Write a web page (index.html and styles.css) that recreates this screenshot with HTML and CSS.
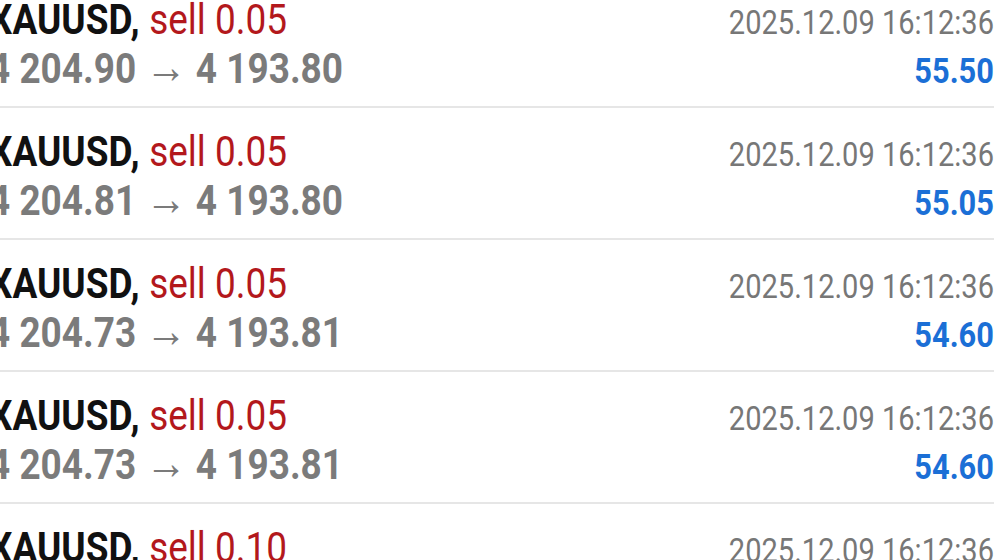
FILE: index.html
```html
<!DOCTYPE html>
<html lang="en">
  <head>
    <meta charset="UTF-8" />
    <meta name="viewport" content="width=device-width, initial-scale=1.0" />
    <title>History - Deals</title>
    <link rel="stylesheet" href="styles.css">
  </head>
  <body>
    <div class="deals">
      <div class="deal">
        <div class="line">
          <span class="symbol">XAUUSD,</span>
          <span class="type">sell 0.05</span>
          <span class="time">2025.12.09 16:12:36</span>
        </div>
        <div class="line">
          <span class="prices">4 204.90 <span class="arrow">→</span> 4 193.80</span>
          <span class="profit">55.50</span>
        </div>
      </div>
      <div class="deal">
        <div class="line">
          <span class="symbol">XAUUSD,</span>
          <span class="type">sell 0.05</span>
          <span class="time">2025.12.09 16:12:36</span>
        </div>
        <div class="line">
          <span class="prices">4 204.81 <span class="arrow">→</span> 4 193.80</span>
          <span class="profit">55.05</span>
        </div>
      </div>
      <div class="deal">
        <div class="line">
          <span class="symbol">XAUUSD,</span>
          <span class="type">sell 0.05</span>
          <span class="time">2025.12.09 16:12:36</span>
        </div>
        <div class="line">
          <span class="prices">4 204.73 <span class="arrow">→</span> 4 193.81</span>
          <span class="profit">54.60</span>
        </div>
      </div>
      <div class="deal">
        <div class="line">
          <span class="symbol">XAUUSD,</span>
          <span class="type">sell 0.05</span>
          <span class="time">2025.12.09 16:12:36</span>
        </div>
        <div class="line">
          <span class="prices">4 204.73 <span class="arrow">→</span> 4 193.81</span>
          <span class="profit">54.60</span>
        </div>
      </div>
      <div class="deal">
        <div class="line">
          <span class="symbol">XAUUSD,</span>
          <span class="type">sell 0.10</span>
          <span class="time">2025.12.09 16:12:36</span>
        </div>
        <div class="line">
          <span class="prices">4 204.73 <span class="arrow">→</span> 4 193.81</span>
          <span class="profit">109.20</span>
        </div>
      </div>
    </div>
  </body>
</html>
```

FILE: styles.css
```css
html,
body {
  margin: 0;
  padding: 0;
  background: #fff;
  overflow: hidden;
}
body {
  font-family: Roboto, "Liberation Sans", sans-serif;
  width: 996px;
  height: 560px;
}
/* the phone screenshot is squeezed sideways */
.deals {
  width: 1142px;
  margin: -26px 0 0 -11px;
  transform: scaleX(0.88);
  transform-origin: 0 0;
}
.deal {
  padding: 22px 0 15px;
  border-top: 2px solid #e6e6e6;
}
.deal:first-child {
  border-top-color: transparent;
}
.line {
  display: flex;
  align-items: baseline;
  height: 48px;
}
.line:first-child {
  height: 45px;
}
.symbol {
  font-size: 42px;
  font-weight: 700;
  color: #111;
  line-height: 44px;
}
.type {
  font-size: 42px;
  color: #b3181c;
  margin-left: 11px;
  line-height: 44px;
}
.time {
  margin-left: auto;
  font-size: 33px;
  color: #777;
  line-height: 44px;
}
.prices {
  font-size: 42px;
  font-weight: 700;
  color: #7b7b7b;
  line-height: 48px;
}
.arrow {
  font-size: 47px;
  font-weight: 400;
  line-height: 1;
  color: #7b7b7b;
}
.profit {
  margin-left: auto;
  font-size: 35px;
  font-weight: 700;
  color: #1b6fd6;
  line-height: 48px;
}
```
